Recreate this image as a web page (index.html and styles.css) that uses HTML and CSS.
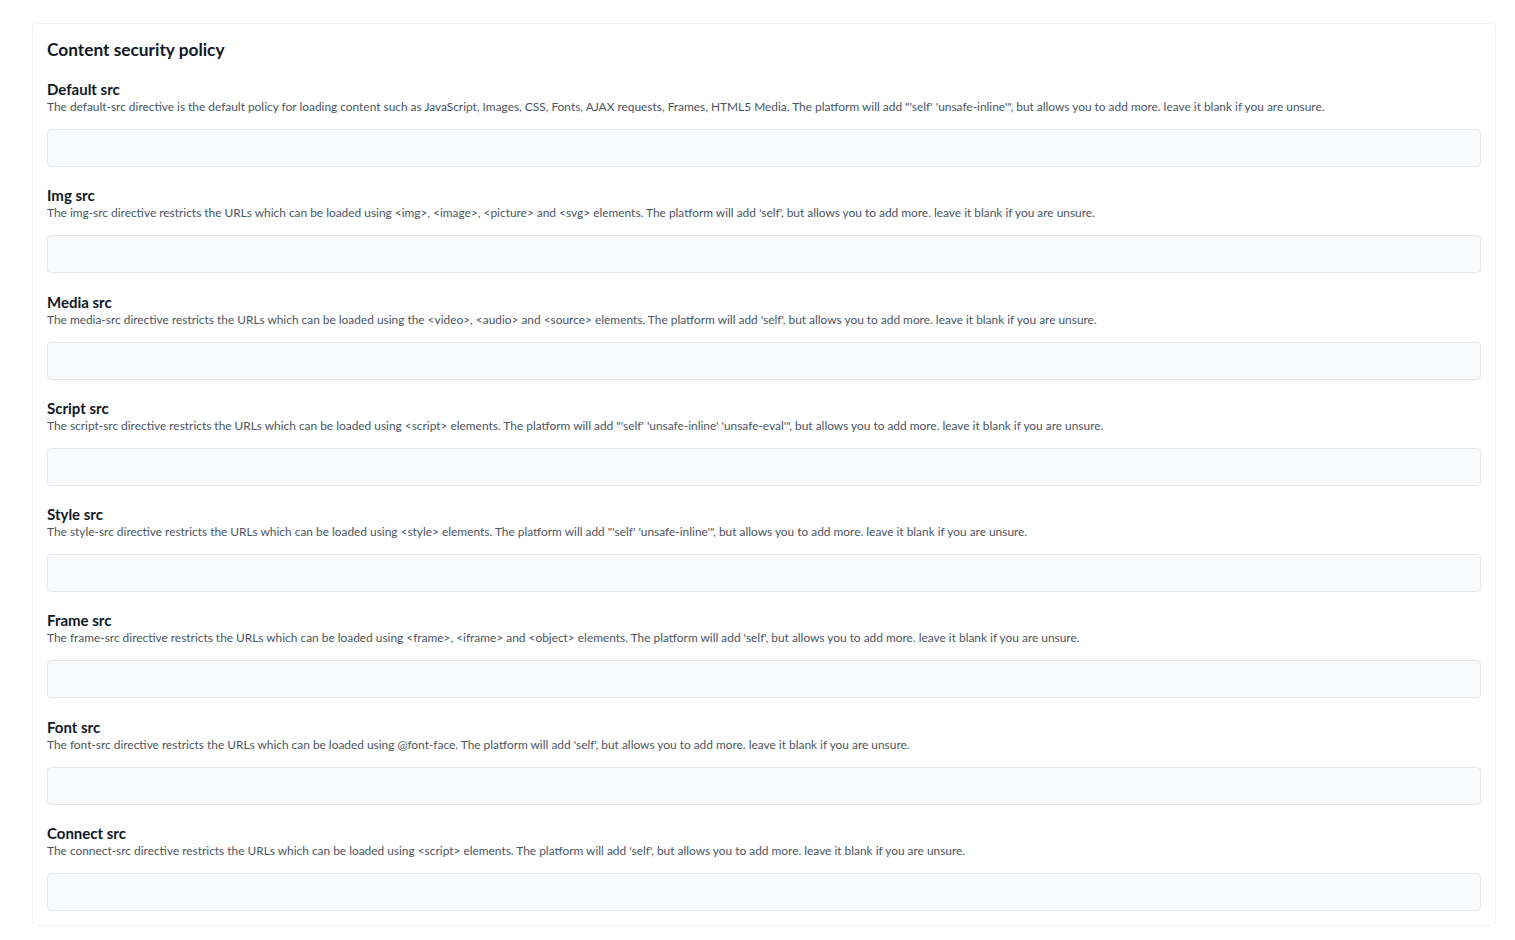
FILE: index.html
```html
<!DOCTYPE html>
<html lang="en">
<head>
    <meta charset="UTF-8">
    <title>Content security policy</title>
    <link rel="stylesheet" href="styles.css">
</head>
<body>
    <div class="card">
        <h2 class="card-title">Content security policy</h2>

        <div class="field">
            <label class="field-label" for="defaultSrc">Default src</label>
            <p class="field-help">The default-src directive is the default policy for loading content such as JavaScript, Images, CSS, Fonts, AJAX requests, Frames, HTML5 Media. The platform will add "'self' 'unsafe-inline'", but allows you to add more. leave it blank if you are unsure.</p>
            <input class="field-input" id="defaultSrc" type="text">
        </div>

        <div class="field">
            <label class="field-label" for="imgSrc">Img src</label>
            <p class="field-help">The img-src directive restricts the URLs which can be loaded using &lt;img&gt;, &lt;image&gt;, &lt;picture&gt; and &lt;svg&gt; elements. The platform will add 'self', but allows you to add more. leave it blank if you are unsure.</p>
            <input class="field-input" id="imgSrc" type="text">
        </div>

        <div class="field">
            <label class="field-label" for="mediaSrc">Media src</label>
            <p class="field-help">The media-src directive restricts the URLs which can be loaded using the &lt;video&gt;, &lt;audio&gt; and &lt;source&gt; elements. The platform will add 'self', but allows you to add more. leave it blank if you are unsure.</p>
            <input class="field-input" id="mediaSrc" type="text">
        </div>

        <div class="field">
            <label class="field-label" for="scriptSrc">Script src</label>
            <p class="field-help">The script-src directive restricts the URLs which can be loaded using &lt;script&gt; elements. The platform will add "'self' 'unsafe-inline' 'unsafe-eval'", but allows you to add more. leave it blank if you are unsure.</p>
            <input class="field-input" id="scriptSrc" type="text">
        </div>

        <div class="field">
            <label class="field-label" for="styleSrc">Style src</label>
            <p class="field-help">The style-src directive restricts the URLs which can be loaded using &lt;style&gt; elements. The platform will add "'self' 'unsafe-inline'", but allows you to add more. leave it blank if you are unsure.</p>
            <input class="field-input" id="styleSrc" type="text">
        </div>

        <div class="field">
            <label class="field-label" for="frameSrc">Frame src</label>
            <p class="field-help">The frame-src directive restricts the URLs which can be loaded using &lt;frame&gt;, &lt;iframe&gt; and &lt;object&gt; elements. The platform will add 'self', but allows you to add more. leave it blank if you are unsure.</p>
            <input class="field-input" id="frameSrc" type="text">
        </div>

        <div class="field">
            <label class="field-label" for="fontSrc">Font src</label>
            <p class="field-help">The font-src directive restricts the URLs which can be loaded using @font-face. The platform will add 'self', but allows you to add more. leave it blank if you are unsure.</p>
            <input class="field-input" id="fontSrc" type="text">
        </div>

        <div class="field">
            <label class="field-label" for="connectSrc">Connect src</label>
            <p class="field-help">The connect-src directive restricts the URLs which can be loaded using &lt;script&gt; elements. The platform will add 'self', but allows you to add more. leave it blank if you are unsure.</p>
            <input class="field-input" id="connectSrc" type="text">
        </div>
    </div>
</body>
</html>
```

FILE: styles.css
```css
* {
    margin: 0;
    padding: 0;
    box-sizing: border-box;
}

body {
    font-family: Lato, "Noto Sans", sans-serif;
    background-color: #ffffff;
    color: #111827;
    padding: 23px 19px 14px 32px;
}

.card {
    border: 1px solid #f0f1f3;
    border-radius: 4px;
    padding: 14px;
    display: flex;
    flex-direction: column;
}

.card-title {
    font-size: 17.3px;
    font-weight: 700;
    line-height: 24px;
    margin-bottom: 18px;
}

.field {
    display: flex;
    flex-direction: column;
    margin-bottom: 19.25px;
}

.field:last-child {
    margin-bottom: 0;
}

.field-label {
    font-size: 15px;
    font-weight: 700;
    line-height: 18px;
}

.field-help {
    font-size: 11.9px;
    color: #4b5563;
    line-height: 18px;
    margin-bottom: 13px;
}

.field-input {
    height: 38px;
    width: 100%;
    background-color: #f9fafb;
    border: 1px solid #e5e7eb;
    border-radius: 4px;
    padding: 0 12px;
    font-family: inherit;
    font-size: 14px;
    outline: none;
}
```
